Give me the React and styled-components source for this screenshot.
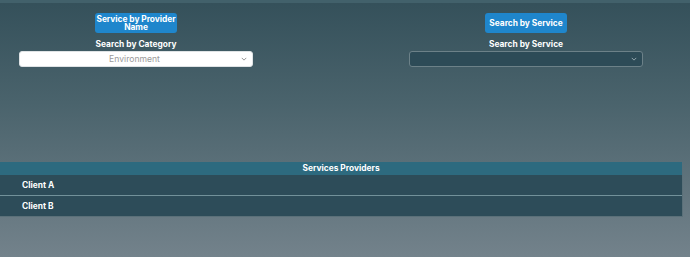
import React from 'react';
import styled, { createGlobalStyle } from 'styled-components';

const GlobalStyle = createGlobalStyle`
  html, body {
    margin: 0;
    padding: 0;
  }
  body {
    font-family: Inter, "Noto Sans", sans-serif;
    background: linear-gradient(180deg, #34505a 0%, #4a636c 40%, #73828b 100%);
    min-height: 257px;
    color: #ffffff;
  }
`;

const App = () => {
  return (
    <>
      <GlobalStyle />
      <Page>
        <TopStrip />
        <SearchRow>
          <SearchColumn>
            <ActionButton>Service by Provider Name</ActionButton>
            <FieldLabel>Search by Category</FieldLabel>
            <SelectBox $light>
              <SelectText>Environment</SelectText>
              <Chevron $light />
            </SelectBox>
          </SearchColumn>
          <SearchColumn>
            <ActionButton>Search by Service</ActionButton>
            <FieldLabel>Search by Service</FieldLabel>
            <SelectBox>
              <SelectText />
              <Chevron />
            </SelectBox>
          </SearchColumn>
        </SearchRow>

        <ProvidersTable>
          <TableHeader>Services Providers</TableHeader>
          <ClientRow>Client A</ClientRow>
          <ClientRow $last>Client B</ClientRow>
        </ProvidersTable>
      </Page>
    </>
  );
};

const Chevron = ({ $light }) => (
  <ChevronIcon viewBox="0 0 8 5" width="6" height="4">
    <path
      d="M1 1 L4 4 L7 1"
      fill="none"
      stroke={$light ? '#8a8a8a' : '#9fb0b6'}
      strokeWidth="1.2"
    />
  </ChevronIcon>
);

const Page = styled.div`
  display: flex;
  flex-direction: column;
  min-height: 257px;
`;

const TopStrip = styled.div`
  height: 3px;
  background-color: #42616b;
`;

const SearchRow = styled.div`
  display: flex;
  gap: 156px;
  padding: 10px 0 0 19px;
`;

const SearchColumn = styled.div`
  width: 234px;
  display: flex;
  flex-direction: column;
  align-items: center;
`;

const ActionButton = styled.button`
  width: 82px;
  height: 20px;
  padding: 0;
  border: none;
  border-radius: 3px;
  background-color: #1f86cc;
  color: #ffffff;
  font-family: Inter, "Noto Sans", sans-serif;
  font-weight: 700;
  font-size: 8.4px;
  line-height: 8.5px;
  letter-spacing: -0.05px;
  text-align: center;
  cursor: pointer;
`;

const FieldLabel = styled.div`
  margin-top: 6px;
  font-size: 8.4px;
  font-weight: 700;
  line-height: 11px;
  color: #ffffff;
`;

const SelectBox = styled.div`
  width: 100%;
  height: 16px;
  box-sizing: border-box;
  margin-top: 1px;
  display: flex;
  align-items: center;
  padding: 0 5px 0 8px;
  border-radius: 3px;
  border: 1px solid ${({ $light }) => ($light ? '#dfe3e5' : '#6c8188')};
  background-color: ${({ $light }) => ($light ? '#ffffff' : '#2d4b57')};
`;

const SelectText = styled.span`
  flex: 1;
  text-align: center;
  font-size: 8.6px;
  color: #9a9a9a;
`;

const ChevronIcon = styled.svg`
  flex-shrink: 0;
`;

const ProvidersTable = styled.div`
  width: 683px;
  margin-top: 95px;
  box-sizing: border-box;
  border-right: 1px solid #5a7079;
  border-bottom: 1px solid #5a7079;
`;

const TableHeader = styled.div`
  height: 13px;
  line-height: 13px;
  background-color: #2d6a7f;
  text-align: center;
  font-size: 8.4px;
  font-weight: 700;
`;

const ClientRow = styled.div`
  height: 20px;
  line-height: 20px;
  padding-left: 22px;
  background-color: #2d4c59;
  font-size: 8.4px;
  font-weight: 700;
  border-bottom: ${({ $last }) => ($last ? 'none' : '1px solid #72919a')};
`;

export default App;
